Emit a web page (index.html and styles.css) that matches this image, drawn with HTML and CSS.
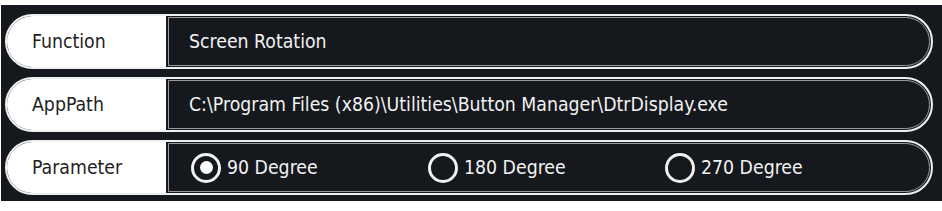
FILE: index.html
```html
<!DOCTYPE html>
<html>
<head>
<meta charset="utf-8">
<link rel="stylesheet" href="styles.css">
</head>
<body>
<div class="panel">
  <div class="row">
    <div class="label">Function</div>
    <div class="value">Screen Rotation</div>
  </div>
  <div class="row">
    <div class="label">AppPath</div>
    <div class="value">C:\Program Files (x86)\Utilities\Button Manager\DtrDisplay.exe</div>
  </div>
  <div class="row">
    <div class="label">Parameter</div>
    <div class="value radios">
      <div class="radio checked"><span class="circle"><span class="dot"></span></span><span>90 Degree</span></div>
      <div class="radio"><span class="circle"></span><span>180 Degree</span></div>
      <div class="radio"><span class="circle"></span><span>270 Degree</span></div>
    </div>
  </div>
</div>
</body>
</html>
```
FILE: styles.css
```css
html, body {
  margin: 0;
  padding: 0;
  background: #ffffff;
}
.panel {
  margin: 5px 0 0 1px;
  height: 196px;
  box-sizing: border-box;
  background: #15181d;
  padding: 9px 9px 6px 4px;
  display: flex;
  flex-direction: column;
  gap: 8px;
  font-family: "DejaVu Sans Condensed", "DejaVu Sans", sans-serif;
  font-stretch: condensed;
  font-size: 19.3px;
}
.row {
  height: 55px;
  box-sizing: border-box;
  border: 2px solid #f0f0f0;
  border-radius: 28px;
  display: flex;
  overflow: hidden;
  background: #15181d;
}
.label {
  width: 159px;
  flex: none;
  background: #ffffff;
  color: #1e1e22;
  display: flex;
  align-items: center;
  padding-left: 25px;
  box-sizing: border-box;
}
.value {
  flex: 1;
  margin: 1px 1px 1px 2px;
  border: 1px solid #9c9c9c;
  border-radius: 0 25px 25px 0;
  color: #f2f2f2;
  display: flex;
  align-items: center;
  padding-left: 20px;
}
.radios {
  padding-left: 22px;
}
.radio {
  width: 237px;
  display: flex;
  align-items: center;
  gap: 6px;
}
.circle {
  width: 30px;
  height: 30px;
  box-sizing: border-box;
  border: 3px solid #f0f0f0;
  border-radius: 50%;
  display: flex;
  align-items: center;
  justify-content: center;
}
.dot {
  width: 13px;
  height: 13px;
  border-radius: 50%;
  background: #ffffff;
}
```
